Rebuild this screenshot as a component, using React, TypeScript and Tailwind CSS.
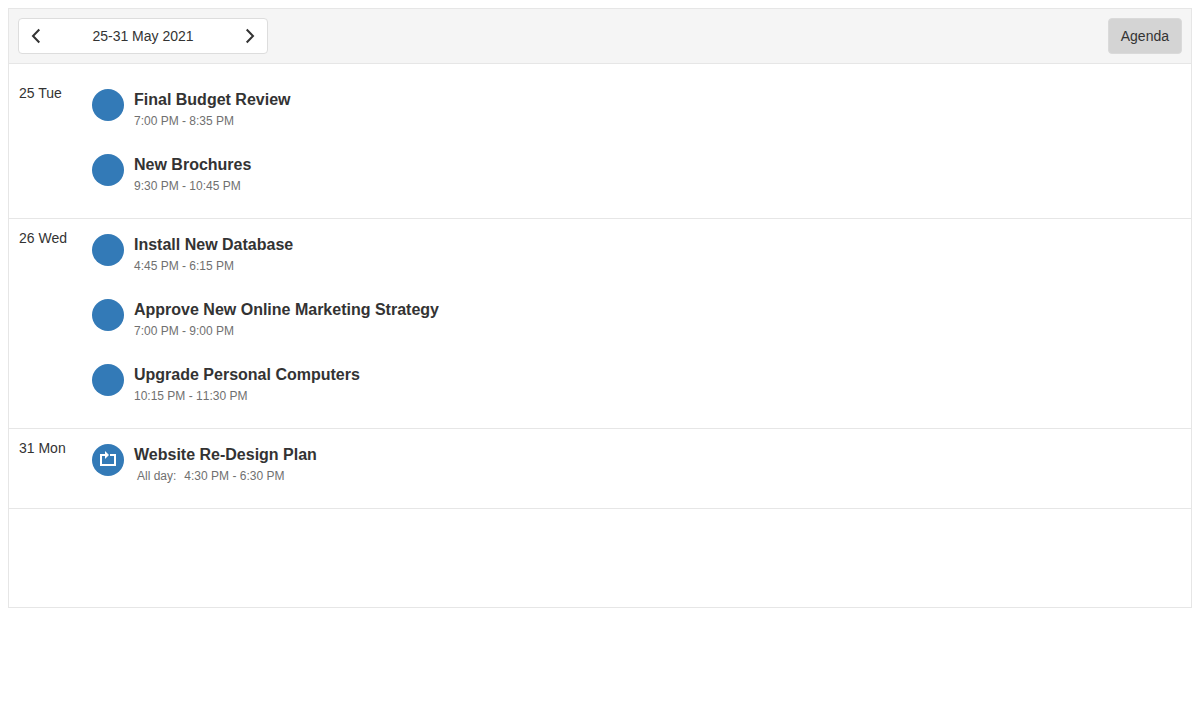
type Appointment = {
  title: string;
  start: string;
  end: string;
  allDay?: boolean;
  recurring?: boolean;
};

type Day = { label: string; appointments: Appointment[] };

const days: Day[] = [
  {
    label: "25 Tue",
    appointments: [
      { title: "Final Budget Review", start: "7:00 PM", end: "8:35 PM" },
      { title: "New Brochures", start: "9:30 PM", end: "10:45 PM" },
    ],
  },
  {
    label: "26 Wed",
    appointments: [
      { title: "Install New Database", start: "4:45 PM", end: "6:15 PM" },
      { title: "Approve New Online Marketing Strategy", start: "7:00 PM", end: "9:00 PM" },
      { title: "Upgrade Personal Computers", start: "10:15 PM", end: "11:30 PM" },
    ],
  },
  {
    label: "31 Mon",
    appointments: [
      { title: "Website Re-Design Plan", start: "4:30 PM", end: "6:30 PM", allDay: true, recurring: true },
    ],
  },
];

function Chevron({ direction }: { direction: "left" | "right" }) {
  return (
    <svg viewBox="0 0 18 18" className="size-[18px]" fill="none" stroke="#333" strokeWidth="2" aria-hidden="true">
      <path d={direction === "left" ? "M12.3 2.5 6 9l6.3 6.5" : "M5.7 2.5 12 9l-6.3 6.5"} />
    </svg>
  );
}

function RecurrenceIcon() {
  return (
    <svg viewBox="0 0 32 32" className="size-8" aria-hidden="true">
      <path d="M13 11H9v10h14V11h-5" fill="none" stroke="#fff" strokeWidth="2" />
      <path d="M13 7l4 4-4 4z" fill="#fff" />
    </svg>
  );
}

function AppointmentRow({ item }: { item: Appointment }) {
  return (
    <li className="flex h-[65px] gap-[10px] pt-[15px]">
      <span className="size-8 shrink-0 rounded-full bg-[#337ab7]">
        {item.recurring && <RecurrenceIcon />}
      </span>
      <div>
        <h3 className="text-base leading-[22px] font-bold">{item.title}</h3>
        <p className="flex gap-2 text-xs leading-5 text-[#707070] [font-kerning:none]">
          {item.allDay && <span className="pl-[3px]">All day:</span>}
          <span>{`${item.start} - ${item.end}`}</span>
        </p>
      </div>
    </li>
  );
}

export default function App() {
  return (
    <main className="p-2 font-['Liberation_Sans',Arial,sans-serif] text-sm text-[#333]">
      <div className="min-h-[600px] border border-[#e6e6e6] bg-white">
        <header className="flex items-center justify-between border-b border-[#e6e6e6] bg-[#f5f5f5] p-[9px]">
          <div className="flex h-9 w-[250px] items-stretch rounded border border-[#ddd] bg-white">
            <button type="button" aria-label="Previous week" className="flex w-[34px] items-center justify-center">
              <Chevron direction="left" />
            </button>
            <button type="button" className="flex-1">25-31 May 2021</button>
            <button type="button" aria-label="Next week" className="flex w-[34px] items-center justify-center">
              <Chevron direction="right" />
            </button>
          </div>
          <button type="button" className="h-9 rounded border border-[#dadada] bg-[#d4d4d4] px-3">
            Agenda
          </button>
        </header>
        <div className="pt-[10px]">
          {days.map((day) => (
            <section key={day.label} className="flex border-b border-[#e6e6e6] pb-[14px] pl-[10px]">
              <h2 className="w-[73px] shrink-0 pt-[9px] leading-5">{day.label}</h2>
              <ul className="flex-1">
                {day.appointments.map((item) => (
                  <AppointmentRow key={item.title} item={item} />
                ))}
              </ul>
            </section>
          ))}
        </div>
      </div>
    </main>
  );
}
